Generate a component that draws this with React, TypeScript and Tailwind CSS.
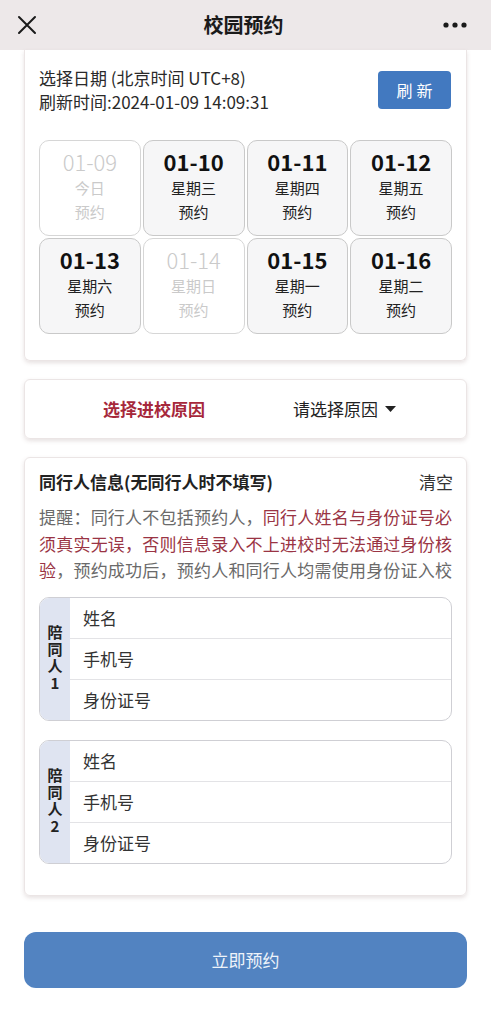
import React from "react";

const dates = [
  { d: "01-09", w: "今日", off: true },
  { d: "01-10", w: "星期三" },
  { d: "01-11", w: "星期四" },
  { d: "01-12", w: "星期五" },
  { d: "01-13", w: "星期六" },
  { d: "01-14", w: "星期日", off: true },
  { d: "01-15", w: "星期一" },
  { d: "01-16", w: "星期二" },
];

function Companion({ n }: { n: number }) {
  return (
    <div className="flex rounded-[10px] border border-[#cfcfd4] overflow-hidden h-[124px]">
      <div className="w-[30px] bg-[#dfe4f1] flex items-center justify-center">
        <div className="[writing-mode:vertical-rl] [text-orientation:upright] text-[15px] leading-[15px] tracking-[2px] font-bold text-[#222]">
          陪同人{n}
        </div>
      </div>
      <div className="flex-1 flex flex-col text-[17px] text-[#333]">
        <div className="flex-1 flex items-center pl-[13px] border-b border-[#e3e3e6]">姓名</div>
        <div className="flex-1 flex items-center pl-[13px] border-b border-[#e3e3e6]">手机号</div>
        <div className="flex-1 flex items-center pl-[13px]">身份证号</div>
      </div>
    </div>
  );
}

export default function App() {
  return (
    <div
      className="w-[491px] min-h-[1024px] bg-white"
      style={{ fontFamily: '"Noto Sans CJK SC", "Noto Sans", sans-serif' }}
    >
      {/* header */}
      <div className="h-[50px] bg-[#ede8e9] flex items-center justify-between px-[14px]">
        <svg width="22" height="22" viewBox="0 0 22 22" className="ml-[2px]">
          <path d="M3 3 L19 19 M19 3 L3 19" stroke="#1a1a1a" strokeWidth="2" strokeLinecap="round" />
        </svg>
        <div className="text-[20px] font-bold text-[#1a1a1a] pl-[6px]">校园预约</div>
        <svg width="24" height="8" viewBox="0 0 24 8" className="mr-[10px]">
          <circle cx="3" cy="4" r="2.6" fill="#1a1a1a" />
          <circle cx="12" cy="4" r="2.6" fill="#1a1a1a" />
          <circle cx="21" cy="4" r="2.6" fill="#1a1a1a" />
        </svg>
      </div>

      <div className="mx-[24px]">
        {/* card 1 */}
        <div className="border border-t-0 border-[#ebe5e5] rounded-b-[6px] shadow-[0_2px_4px_rgba(120,90,90,0.18)] px-[14px] pt-[16px] pb-[26px]">
          <div className="flex items-center justify-between">
            <div className="text-[17px] leading-[24px] text-[#2a2a2a]">
              <div>选择日期 (北京时间 UTC+8)</div>
              <div>刷新时间:2024-01-09 14:09:31</div>
            </div>
            <div className="w-[73px] h-[38px] rounded-[4px] bg-[#4279c0] text-white text-[16px] flex items-center justify-center tracking-[4px] pl-[4px] mr-[1px]">
              刷新
            </div>
          </div>
          <div className="grid grid-cols-4 gap-[2px] mt-[26px]">
            {dates.map((x) => (
              <div
                key={x.d}
                className={
                  "h-[96px] rounded-[10px] border flex flex-col items-center pt-[6px] " +
                  (x.off ? "bg-white border-[#d6d6d6] text-[#cacaca]" : "bg-[#f6f6f7] border-[#c9c9c9] text-[#222]")
                }
              >
                <div className={"text-[22px] leading-[28px] " + (x.off ? "font-light" : "font-bold text-[#111]")}>{x.d}</div>
                <div className="text-[15px] leading-[24px] mt-[1px]">{x.w}</div>
                <div className="text-[15px] leading-[24px]">预约</div>
              </div>
            ))}
          </div>
        </div>

        {/* card 2 */}
        <div className="mt-[18px] h-[60px] border border-[#ebe5e5] rounded-[6px] shadow-[0_2px_4px_rgba(120,90,90,0.18)] flex items-center pl-[78px]">
          <div className="text-[17px] font-bold text-[#a6283b]">选择进校原因</div>
          <div className="ml-[88px] text-[17px] text-[#222] flex items-center">
            请选择原因
            <svg width="11" height="7" viewBox="0 0 11 7" className="ml-[7px]">
              <path d="M0 0 L11 0 L5.5 6 Z" fill="#222" />
            </svg>
          </div>
        </div>

        {/* card 3 */}
        <div className="mt-[18px] border border-[#ebe5e5] rounded-[6px] shadow-[0_2px_4px_rgba(120,90,90,0.18)] px-[14px] pt-[12px] pb-[31px]">
          <div className="flex items-center justify-between text-[17px] leading-[24px]">
            <div className="font-bold text-[#222]">同行人信息(无同行人时不填写)</div>
            <div className="text-[#333] mr-[-1px]">清空</div>
          </div>
          <div className="mt-[10px] text-[17px] leading-[26.5px] text-[#6a6a6a] text-justify [text-align-last:justify]">
            <div>
              提醒：同行人不包括预约人，<span className="text-[#9a3444]">同行人姓名与身份证号必</span>
            </div>
            <div className="text-[#9a3444]">须真实无误，否则信息录入不上进校时无法通过身份核</div>
            <div>
              <span className="text-[#9a3444]">验</span>，预约成功后，预约人和同行人均需使用身份证入校
            </div>
          </div>
          <div className="mt-[13px]">
            <Companion n={1} />
          </div>
          <div className="mt-[19px]">
            <Companion n={2} />
          </div>
        </div>

        {/* submit */}
        <div className="mt-[36px] h-[56px] rounded-[12px] bg-[#5283c1] flex items-center justify-center text-[17px] text-[#eef3fa]">
          立即预约
        </div>
      </div>
    </div>
  );
}
